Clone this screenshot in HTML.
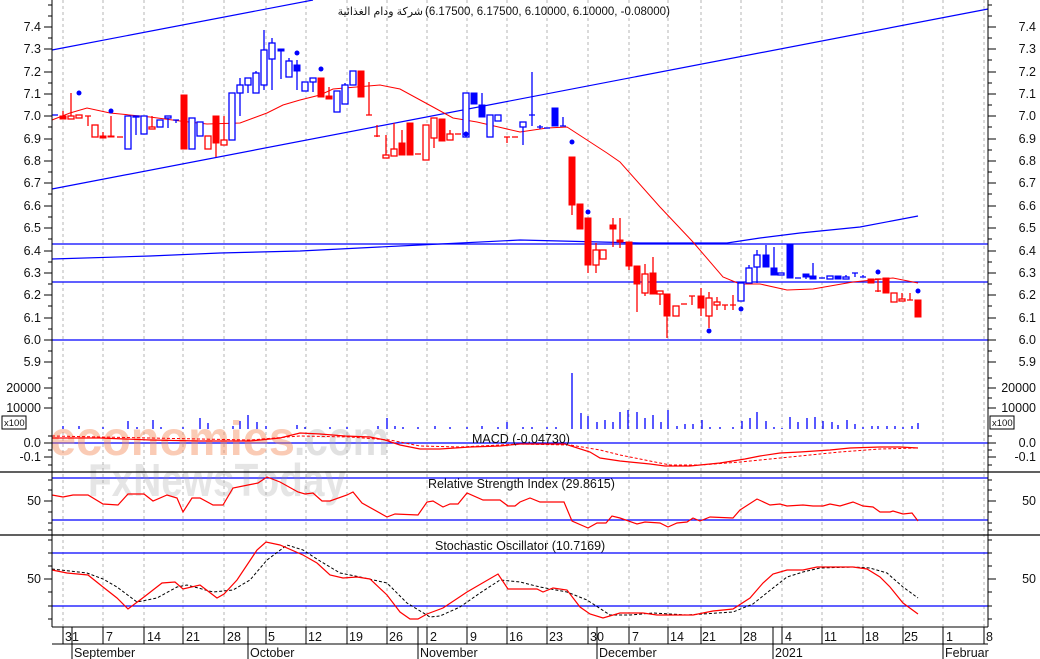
<!DOCTYPE html>
<html><head><meta charset="utf-8"><style>
html,body{margin:0;padding:0;background:#fff;}
svg{display:block;font-family:"Liberation Sans","DejaVu Sans",sans-serif;}
.g{stroke:#b4b4b4;stroke-width:1;stroke-dasharray:3,3}
.rh{fill:#fff;stroke:#f00;stroke-width:1.3}
.rf{fill:#f00;stroke:#f00;stroke-width:1}
.bh{fill:#fff;stroke:#00f;stroke-width:1.3}
.bf{fill:#00f;stroke:#00f;stroke-width:1}
.wr{stroke:#f00;stroke-width:1.3}
.wb{stroke:#00f;stroke-width:1.3}
text{font-size:12.5px;fill:#111}
</style></head><body>
<svg width="1040" height="659" viewBox="0 0 1040 659" xmlns="http://www.w3.org/2000/svg">
<rect width="1040" height="659" fill="#fff"/>
<g class="g">
<path d="M63 0V627M103 0V627M144 0V627M183 0V627M224 0V627M266 0V627M306 0V627M347 0V627M387 0V627M427 0V627M467 0V627M507 0V627M547 0V627M588 0V627M629 0V627M668 0V627M701 0V627M741 0V627M782 0V627M822 0V627M863 0V627M903 0V627M943 0V627M984 0V627"/>
</g>
<g stroke="#00f" stroke-width="1.2" fill="none">
<path d="M52 50L313 0"/>
<path d="M52 189L988 9"/>
<path d="M52 244H988M52 282H988M52 340H988"/>
<path d="M52 259L150 256L220 253L300 251L420 245L520 240L600 242L640 243L727 243L760 238L800 233L860 227L918 216"/>
<path d="M52 443H988M52 478H988M52 520H988M52 553H988M52 606H988"/>
</g>
<polyline fill="none" stroke="#f00" stroke-width="1" points="52,120 70,113 87,108 110,113 150,117 180,121 207,124 240,123 267,113 283,105 300,100 320,95 333,89 380,85 400,89 433,107 453,118 477,122 520,132 547,128 567,127 587,140 607,153 620,162 660,207 693,242 723,277 740,284 760,284 787,290 813,289 853,282 893,278 918,283"/>
<g>
<path class="wb" d="M52 115H58"/>
<path class="wr" d="M63 111V119"/><rect class="rf" x="60" y="116" width="6" height="3"/>
<path class="wr" d="M71 93V119"/><rect class="rh" x="68" y="116" width="6" height="3"/>
<rect class="rh" x="76" y="115" width="6" height="3"/>
<path class="wr" d="M85 116H91M88 116V126"/>
<rect class="rh" x="92" y="125" width="6" height="12"/>
<path class="wr" d="M103 132V138"/><rect class="rf" x="100" y="136" width="6" height="2"/>
<path class="wr" d="M111 116V137"/><rect class="rf" x="108" y="136" width="6" height="1"/>
<path class="wr" d="M117 137H123"/>
<rect class="bh" x="125" y="116" width="6" height="33"/>
<path class="wb" d="M136 116V135"/><rect class="bh" x="133" y="116" width="6" height="1"/>
<rect class="bh" x="141" y="116" width="6" height="18"/>
<path class="wr" d="M152 116V129"/><rect class="rh" x="149" y="127" width="6" height="2"/>
<rect class="bh" x="157" y="120" width="6" height="7"/>
<path class="wb" d="M168 116V128"/><rect class="bh" x="165" y="116" width="6" height="2"/>
<path class="wb" d="M173 120H179M176 120V123"/>
<rect class="rf" x="181" y="95" width="6" height="54"/>
<rect class="bh" x="189" y="118" width="6" height="31"/>
<rect class="bh" x="197" y="122" width="6" height="14"/>
<rect class="rh" x="205" y="136" width="6" height="13"/>
<path class="wr" d="M216 116V157"/><rect class="rf" x="213" y="116" width="6" height="27"/>
<path class="wr" d="M224 116V145"/><rect class="rh" x="221" y="140" width="6" height="5"/>
<rect class="bh" x="229" y="93" width="6" height="47"/>
<path class="wb" d="M240 78V116"/><rect class="bh" x="237" y="85" width="6" height="8"/>
<path class="wb" d="M248 78V93"/><rect class="bh" x="245" y="78" width="6" height="7"/>
<path class="wb" d="M256 71V93"/><rect class="bh" x="253" y="73" width="6" height="20"/>
<path class="wb" d="M264 30V90"/><rect class="bh" x="261" y="50" width="6" height="35"/>
<path class="wb" d="M272 38V90"/><rect class="bh" x="269" y="43" width="6" height="16"/>
<path class="wb" d="M281 49V79"/><rect class="bf" x="278" y="49" width="6" height="2"/>
<path class="wb" d="M289 58V77"/><rect class="bh" x="286" y="61" width="6" height="16"/>
<path class="wb" d="M297 60V90"/><rect class="bf" x="294" y="65" width="6" height="6"/>
<rect class="bh" x="302" y="82" width="6" height="9"/>
<path class="wb" d="M313 78V92"/><rect class="bh" x="310" y="78" width="6" height="4"/>
<rect class="rf" x="318" y="78" width="6" height="19"/>
<path class="wr" d="M329 87V99"/><rect class="rf" x="326" y="96" width="6" height="3"/>
<rect class="bh" x="334" y="91" width="6" height="21"/>
<path class="wb" d="M345 83V104"/><rect class="bh" x="342" y="85" width="6" height="19"/>
<rect class="bh" x="350" y="71" width="6" height="14"/>
<rect class="rf" x="358" y="71" width="6" height="26"/>
<path class="wr" d="M369 82V115M366 115H372"/>
<path class="wr" d="M377 125V137M374 136H380"/>
<path class="wr" d="M386 135V158"/><rect class="rh" x="383" y="155" width="6" height="3"/>
<path class="wr" d="M394 123V156"/><rect class="rh" x="391" y="149" width="6" height="7"/>
<path class="wr" d="M402 130V155"/><rect class="rf" x="399" y="143" width="6" height="12"/>
<rect class="rf" x="407" y="123" width="6" height="32"/>
<path class="wr" d="M415 154H421"/>
<rect class="rh" x="423" y="125" width="6" height="35"/>
<path class="wr" d="M434 118V148"/><rect class="rh" x="431" y="118" width="6" height="20"/>
<rect class="rf" x="439" y="119" width="6" height="22"/>
<path class="wr" d="M450 130V140"/><rect class="rh" x="447" y="134" width="6" height="6"/>
<path class="wr" d="M455 134H461"/>
<rect class="bh" x="463" y="93" width="6" height="44"/>
<rect class="bf" x="471" y="93" width="6" height="11"/>
<path class="wb" d="M482 93V117"/><rect class="bf" x="479" y="105" width="6" height="12"/>
<rect class="bh" x="487" y="115" width="6" height="22"/>
<rect class="bh" x="495" y="115" width="6" height="6"/>
<path class="wr" d="M504 137H510M507 137V143"/>
<path class="wr" d="M512 137H518"/>
<path class="wb" d="M523 122V145"/><rect class="bh" x="520" y="122" width="6" height="5"/>
<path class="wb" d="M532 72V126M529 115H535"/>
<path class="wb" d="M540 125V129M537 127H543"/>
<path class="wb" d="M544 128H550"/>
<rect class="bf" x="552" y="108" width="6" height="18"/>
<path class="wb" d="M563 117V126M560 126H566"/>
<path class="wr" d="M572 157V215"/><rect class="rf" x="569" y="157" width="6" height="48"/>
<rect class="rf" x="577" y="204" width="6" height="25"/>
<path class="wr" d="M588 218V273"/><rect class="rf" x="585" y="218" width="6" height="47"/>
<path class="wr" d="M596 243V273"/><rect class="rh" x="593" y="250" width="6" height="15"/>
<rect class="rh" x="600" y="250" width="6" height="9"/>
<path class="wr" d="M613 218V247"/><rect class="rf" x="610" y="225" width="6" height="4"/>
<path class="wr" d="M620 218V248"/><rect class="rf" x="617" y="240" width="6" height="2"/>
<path class="wr" d="M629 242V270"/><rect class="rf" x="626" y="242" width="6" height="24"/>
<path class="wr" d="M637 266V312"/><rect class="rf" x="634" y="266" width="6" height="18"/>
<path class="wr" d="M645 264V296"/><rect class="rh" x="642" y="274" width="6" height="19"/>
<path class="wr" d="M653 257V294"/><rect class="rf" x="650" y="273" width="6" height="21"/>
<path class="wr" d="M660 291V305"/><rect class="rh" x="657" y="291" width="6" height="3"/>
<path class="wr" d="M667 294V338"/><rect class="rf" x="664" y="294" width="6" height="22"/>
<rect class="rh" x="673" y="306" width="6" height="10"/>
<path class="wr" d="M681 304H687"/>
<path class="wr" d="M689 296H695M692 296V305"/>
<path class="wr" d="M701 288V316"/><rect class="rf" x="698" y="296" width="6" height="12"/>
<path class="wr" d="M709 292V328"/><rect class="rh" x="706" y="298" width="6" height="18"/>
<path class="wr" d="M717 297V310"/><rect class="rh" x="714" y="302" width="6" height="3"/>
<path class="wr" d="M722 305H728M725 305V310"/>
<path class="wr" d="M730 305H736M733 295V310"/>
<rect class="bh" x="738" y="283" width="6" height="18"/>
<path class="wb" d="M749 265V283"/><rect class="bh" x="746" y="268" width="6" height="15"/>
<path class="wb" d="M757 250V283"/><rect class="bh" x="754" y="255" width="6" height="12"/>
<path class="wb" d="M766 245V267"/><rect class="bf" x="763" y="255" width="6" height="12"/>
<path class="wb" d="M774 247V275"/><rect class="bf" x="771" y="268" width="6" height="7"/>
<rect class="bh" x="778" y="273" width="6" height="2"/>
<rect class="bf" x="787" y="245" width="6" height="33"/>
<path class="wb" d="M795 278H801"/>
<path class="wb" d="M806 274V279"/><rect class="bf" x="803" y="274" width="6" height="3"/>
<path class="wb" d="M813 263V279"/><rect class="bf" x="810" y="276" width="6" height="3"/>
<path class="wb" d="M819 278H825"/>
<rect class="bh" x="827" y="276" width="6" height="3"/>
<rect class="bf" x="835" y="276" width="6" height="3"/>
<path class="wb" d="M846 275V279"/><rect class="bh" x="843" y="277" width="6" height="2"/>
<path class="wb" d="M852 273H858M855 273V277"/>
<path class="wb" d="M860 277H866M863 275V277"/>
<rect class="rf" x="868" y="279" width="6" height="4"/>
<path class="wr" d="M875 279H881M878 279V292M875 291H881"/>
<rect class="rf" x="883" y="278" width="6" height="15"/>
<rect class="rh" x="891" y="293" width="6" height="9"/>
<path class="wr" d="M902 293V301"/><rect class="rh" x="899" y="299" width="6" height="2"/>
<path class="wr" d="M907 300H913M910 293V300"/>
<rect class="rf" x="915" y="300" width="6" height="17"/>
</g>
<g fill="#00f">
<circle cx="79" cy="93" r="2.5"/><circle cx="111" cy="111" r="2.5"/><circle cx="297" cy="53" r="2.5"/><circle cx="321" cy="69" r="2.5"/><circle cx="466" cy="134" r="2.5"/><circle cx="572" cy="142" r="2.5"/><circle cx="588" cy="212" r="2.5"/><circle cx="709" cy="331" r="2.5"/><circle cx="741" cy="309" r="2.5"/><circle cx="878" cy="272" r="2.5"/><circle cx="918" cy="291" r="2.5"/>
</g>
<path stroke="#00f" stroke-width="1.3" fill="none" d="M63 429V426M79 429V426M103 429V427M128 429V421M137 429V427M153 429V420M161 429V427M183 429V427M200 429V418M208 429V423M233 429V426M240 429V421M248 429V415M257 429V422M266 429V426M297 429V425M305 429V427M330 429V427M347 429V427M378 429V426M387 429V418M395 429V426M403 429V427M418 429V427M435 429V426M450 429V427M467 429V427M482 429V426M498 429V427M507 429V422M523 429V427M532 429V427M547 429V427M556 429V427M572 429V373M581 429V413M588 429V416M597 429V422M605 429V420M613 429V422M620 429V412M628 429V410M637 429V412M645 429V418M653 429V415M661 429V422M668 429V410M677 429V426M685 429V424M693 429V424M702 429V420M710 429V427M720 429V427M733 429V427M742 429V421M750 429V418M757 429V412M766 429V421M774 429V427M782 429V428M790 429V417M798 429V422M807 429V418M815 429V417M823 429V421M832 429V422M838 429V425M847 429V420M855 429V424M863 429V427M872 429V426M878 429V426M887 429V426M895 429V426M903 429V427M912 429V426M918 429V423"/>
<text x="50" y="455" style="font-size:48px;font-weight:bold;fill:rgba(245,140,90,0.45)" textLength="245" lengthAdjust="spacingAndGlyphs">economies</text>
<text x="294" y="455" style="font-size:48px;font-weight:bold;fill:rgba(170,170,170,0.35)" textLength="95" lengthAdjust="spacingAndGlyphs">.com</text>
<text x="88" y="496" style="font-size:46px;font-weight:bold;fill:rgba(150,150,150,0.25)" textLength="258" lengthAdjust="spacingAndGlyphs">FxNewsToday</text>
<polyline fill="none" stroke="#f00" stroke-width="1.2" points="52,438 100,438 150,440 200,441 250,441 280,438 300,433 320,434 345,436 370,437 385,440 400,445 420,449 440,449 470,447 500,446 520,444 565,444 590,452 600,458 620,461 650,464 665,466 690,466 720,463 745,459 760,456 780,453 800,452 830,450 850,448 880,447 900,447 918,448"/>
<polyline fill="none" stroke="#f00" stroke-width="1" stroke-dasharray="3,2" points="52,436 150,438 250,440 300,436 350,437 390,440 420,446 460,447 520,444 570,445 600,450 620,455 640,459 670,465 700,465 740,462 770,459 800,456 840,452 880,449 918,448"/>
<polyline fill="none" stroke="#f00" stroke-width="1.2" points="52,495 63,497 73,495 88,495 103,504 118,505 128,494 144,494 153,501 167,495 177,498 183,512 192,498 200,498 213,505 223,505 233,488 248,485 258,483 267,477 280,482 298,492 305,494 313,493 322,501 330,501 347,495 353,492 362,503 387,517 395,514 418,515 427,502 433,501 443,507 450,504 458,504 467,493 483,500 500,500 508,506 515,506 520,502 530,498 540,502 564,502 572,521 588,528 597,523 606,523 612,516 620,518 637,524 645,522 660,523 668,527 677,523 687,522 693,518 700,521 710,517 733,518 740,510 757,499 770,505 780,504 787,506 803,505 813,506 823,506 830,504 840,506 853,502 863,506 873,507 880,512 890,512 893,511 903,514 912,513 918,521"/>
<polyline fill="none" stroke="#000" stroke-width="1" stroke-dasharray="3,2" points="52,569 87,573 103,579 117,587 137,602 157,598 177,587 187,585 213,592 233,590 250,580 267,560 287,545 303,550 320,561 340,573 360,577 387,583 407,603 430,617 440,616 460,607 480,593 500,580 520,582 540,587 567,592 587,600 610,615 630,615 653,613 687,615 733,612 753,604 773,588 787,577 803,572 820,568 853,567 870,568 887,573 903,587 918,598"/>
<polyline fill="none" stroke="#f00" stroke-width="1.2" points="52,570 67,573 88,575 103,587 117,598 128,609 144,597 153,590 162,583 175,582 183,589 200,585 217,598 224,594 237,580 257,550 266,542 280,545 303,555 317,563 330,575 343,578 357,577 370,579 387,595 400,612 410,619 418,619 427,614 443,608 467,592 498,574 508,589 520,589 537,589 543,592 553,588 567,590 580,607 590,614 603,618 620,613 643,613 657,615 693,615 713,611 733,609 750,598 763,583 773,574 787,570 803,570 817,567 853,567 867,569 880,577 890,587 903,603 918,614"/>
<path stroke="#000" stroke-width="1.3" d="M0 472H1040M0 535H1040"/>
<g stroke="#000" stroke-width="1" fill="none">
<path d="M52 0V627M988 0V627"/>
<path d="M44 27H52M44 49H52M44 72H52M44 94H52M44 116H52M44 139H52M44 161H52M44 183H52M44 206H52M44 228H52M44 251H52M44 273H52M44 295H52M44 318H52M44 340H52M44 362H52M48 38H52M48 60H52M48 83H52M48 105H52M48 127H52M48 150H52M48 172H52M48 194H52M48 217H52M48 239H52M48 262H52M48 284H52M48 306H52M48 329H52M48 351H52M48 16H52M48 5H52"/>
<path d="M988 27H996M988 49H996M988 72H996M988 94H996M988 116H996M988 139H996M988 161H996M988 183H996M988 206H996M988 228H996M988 251H996M988 273H996M988 295H996M988 318H996M988 340H996M988 362H996M988 38H992M988 60H992M988 83H992M988 105H992M988 127H992M988 150H992M988 172H992M988 194H992M988 217H992M988 239H992M988 262H992M988 284H992M988 306H992M988 329H992M988 351H992M988 16H992M988 5H992"/>
<path d="M44 388H52M44 408H52M48 398H52M48 378H52M44 443H52M44 457H52M48 450H52M48 465H52M48 436H52M44 501H52M48 480H52M48 490H52M48 512H52M48 523H52M48 530H52M44 579H52M48 540H52M48 553H52M48 566H52M48 592H52M48 606H52M48 619H52"/>
<path d="M988 388H996M988 408H996M988 398H992M988 378H992M988 443H996M988 457H996M988 450H992M988 465H992M988 436H992M988 501H996M988 480H992M988 490H992M988 512H992M988 523H992M988 530H992M988 579H996M988 540H992M988 553H992M988 566H992M988 592H992M988 606H992M988 619H992"/>
<rect x="2" y="416" width="24" height="13"/>
<rect x="990" y="416" width="24" height="13"/>
<path d="M52 627H988M52 644H988"/>
<path d="M63 627V644M103 627V644M144 627V644M183 627V644M224 627V644M266 627V644M306 627V644M347 627V644M387 627V644M427 627V644M467 627V644M507 627V644M547 627V644M588 627V644M629 627V644M668 627V644M701 627V644M741 627V644M782 627V644M822 627V644M863 627V644M903 627V644M943 627V644M984 627V644"/>
<path d="M72 627V659M248 627V659M418 627V659M597 627V659M773 627V659M943 627V659"/>
</g>
<g text-anchor="end">
<text x="41" y="31">7.4</text><text x="41" y="53">7.3</text><text x="41" y="76">7.2</text><text x="41" y="98">7.1</text><text x="41" y="120">7.0</text><text x="41" y="143">6.9</text><text x="41" y="165">6.8</text><text x="41" y="187">6.7</text><text x="41" y="210">6.6</text><text x="41" y="232">6.5</text><text x="41" y="255">6.4</text><text x="41" y="277">6.3</text><text x="41" y="299">6.2</text><text x="41" y="322">6.1</text><text x="41" y="344">6.0</text><text x="41" y="366">5.9</text>
<text x="41" y="392">20000</text><text x="41" y="412">10000</text>
<text x="41" y="447">0.0</text><text x="41" y="461">-0.1</text>
<text x="41" y="505">50</text><text x="41" y="583">50</text>
</g>
<g text-anchor="end">
<text x="1036" y="31">7.4</text><text x="1036" y="53">7.3</text><text x="1036" y="76">7.2</text><text x="1036" y="98">7.1</text><text x="1036" y="120">7.0</text><text x="1036" y="143">6.9</text><text x="1036" y="165">6.8</text><text x="1036" y="187">6.7</text><text x="1036" y="210">6.6</text><text x="1036" y="232">6.5</text><text x="1036" y="255">6.4</text><text x="1036" y="277">6.3</text><text x="1036" y="299">6.2</text><text x="1036" y="322">6.1</text><text x="1036" y="344">6.0</text><text x="1036" y="366">5.9</text>
<text x="1036" y="392">20000</text><text x="1036" y="412">10000</text>
<text x="1036" y="447">0.0</text><text x="1036" y="461">-0.1</text>
<text x="1036" y="505">50</text><text x="1036" y="583">50</text>
</g>
<text x="4" y="426" style="font-size:9.5px">x100</text>
<text x="992" y="426" style="font-size:9.5px">x100</text>
<text x="423" y="15" text-anchor="end" style="font-size:11px">شركة ودام الغذائية</text>
<text x="425" y="15" direction="ltr" style="font-size:11.5px;unicode-bidi:embed;direction:ltr">(6.17500, 6.17500, 6.10000, 6.10000, -0.08000)</text>
<text x="472" y="443">MACD (-0.04730)</text>
<text x="428" y="488">Relative Strength Index (29.8615)</text>
<text x="435" y="550">Stochastic Oscillator (10.7169)</text>
<g style="font-size:12.5px">
<text x="65" y="641">31</text><text x="106" y="641">7</text><text x="147" y="641">14</text><text x="186" y="641">21</text><text x="227" y="641">28</text><text x="268" y="641">5</text><text x="308" y="641">12</text><text x="349" y="641">19</text><text x="389" y="641">26</text><text x="430" y="641">2</text><text x="470" y="641">9</text><text x="509" y="641">16</text><text x="549" y="641">23</text><text x="590" y="641">30</text><text x="632" y="641">7</text><text x="670" y="641">14</text><text x="702" y="641">21</text><text x="743" y="641">28</text><text x="785" y="641">4</text><text x="824" y="641">11</text><text x="865" y="641">18</text><text x="904" y="641">25</text><text x="946" y="641">1</text><text x="986" y="641">8</text>
<text x="74" y="657">September</text><text x="250" y="657">October</text><text x="420" y="657">November</text><text x="599" y="657">December</text><text x="775" y="657">2021</text><text x="945" y="657">Februar</text>
</g>
</svg>
</body></html>
